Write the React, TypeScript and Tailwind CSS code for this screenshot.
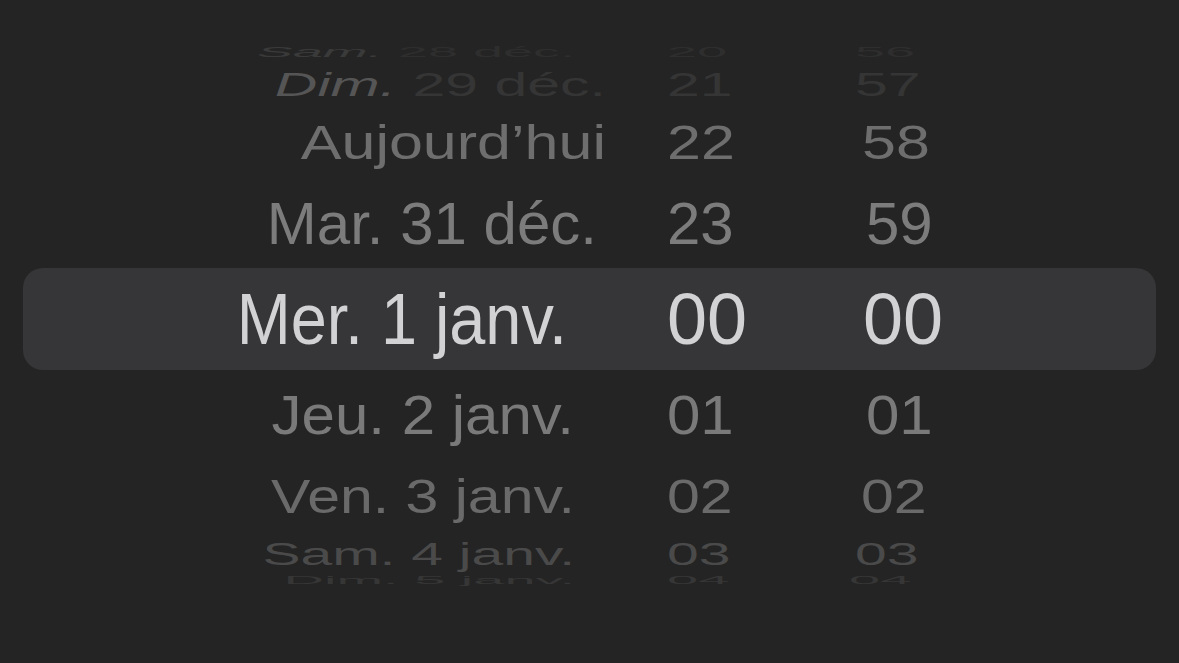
type WheelRow = {
  lead?: string;
  leadClass?: string;
  date: string;
  hour: string;
  min: string;
  height: string;
  size: string;
  scaleY: string;
  color: string;
  dateShift: string;
  minShift: string;
};

// rows above and below the selected one, squashed like a wheel in perspective
const above: WheelRow[] = [
  {
    lead: "Sam.",
    leadClass: "italic text-[#3a3a3a]",
    date: " 28 déc.",
    hour: "20",
    min: "56",
    height: "h-[24px]",
    size: "text-[54px]",
    scaleY: "scale-y-[0.26]",
    color: "text-[#2e2e2e]",
    dateShift: "translate-x-[2px]",
    minShift: "-translate-x-[8px]",
  },
  {
    lead: "Dim.",
    leadClass: "italic text-[#555555]",
    date: " 29 déc.",
    hour: "21",
    min: "57",
    height: "h-[40px]",
    size: "text-[59px]",
    scaleY: "scale-y-[0.57]",
    color: "text-[#353535]",
    dateShift: "translate-x-[33px]",
    minShift: "-translate-x-[8px]",
  },
  {
    date: "Aujourd’hui",
    hour: "22",
    min: "58",
    height: "h-[76px]",
    size: "text-[61px]",
    scaleY: "scale-y-[0.79]",
    color: "text-[#6e6e6e]",
    dateShift: "translate-x-[33px]",
    minShift: "-translate-x-[1px]",
  },
  {
    date: "Mar. 31 déc.",
    hour: "23",
    min: "59",
    height: "h-[88px]",
    size: "text-[60px]",
    scaleY: "scale-y-[0.98]",
    color: "text-[#7c7c7c]",
    dateShift: "translate-x-[24px]",
    minShift: "translate-x-[3px]",
  },
];

const below: WheelRow[] = [
  {
    date: "Jeu. 2 janv.",
    hour: "01",
    min: "01",
    height: "h-[90px]",
    size: "text-[60px]",
    scaleY: "scale-y-[0.94]",
    color: "text-[#7a7a7a]",
    dateShift: "translate-x-[1px]",
    minShift: "translate-x-[3px]",
  },
  {
    date: "Ven. 3 janv.",
    hour: "02",
    min: "02",
    height: "h-[74px]",
    size: "text-[59px]",
    scaleY: "scale-y-[0.82]",
    color: "text-[#6a6a6a]",
    dateShift: "translate-x-[2px]",
    minShift: "-translate-x-[2px]",
  },
  {
    date: "Sam. 4 janv.",
    hour: "03",
    min: "03",
    height: "h-[40px]",
    size: "text-[57px]",
    scaleY: "scale-y-[0.56]",
    color: "text-[#4a4a4a]",
    dateShift: "translate-x-[2px]",
    minShift: "-translate-x-[8px]",
  },
  {
    date: "Dim. 5 janv.",
    hour: "04",
    min: "04",
    height: "h-[12px]",
    size: "text-[56px]",
    scaleY: "scale-y-[0.21]",
    color: "text-[#363636]",
    dateShift: "translate-x-[2px]",
    minShift: "-translate-x-[14px]",
  },
];

function Row({ row }: { row: WheelRow }) {
  return (
    <div className={`flex items-center px-[23px] ${row.height}`}>
      <div
        className={`flex w-full items-center leading-none ${row.size} ${row.color} ${row.scaleY}`}
      >
        <div className={`w-[550px] shrink-0 whitespace-nowrap text-right ${row.dateShift}`}>
          {row.lead && <span className={row.leadClass}>{row.lead}</span>}
          {row.date}
        </div>
        <div className="ml-[94px] w-[196px] shrink-0">{row.hour}</div>
        <div className={row.minShift}>{row.min}</div>
      </div>
    </div>
  );
}

export default function App() {
  return (
    <div className="h-[663px] w-[1179px] overflow-hidden bg-[#242424] pt-[40px] font-['Liberation_Sans',Arial,sans-serif]">
      {above.map((row) => (
        <Row key={row.date} row={row} />
      ))}

      {/* selected row */}
      <div className="mx-[23px] flex h-[102px] items-center rounded-[20px] bg-[#363638] leading-none text-[#d2d2d4]">
        <div className="w-[550px] shrink-0 origin-right -translate-x-[6px] scale-x-[0.9] whitespace-nowrap text-right text-[72px]">
          Mer. 1 janv.
        </div>
        <div className="ml-[94px] w-[196px] shrink-0 text-[72px]">00</div>
        <div className="text-[72px]">00</div>
      </div>

      {below.map((row) => (
        <Row key={row.date} row={row} />
      ))}
    </div>
  );
}
